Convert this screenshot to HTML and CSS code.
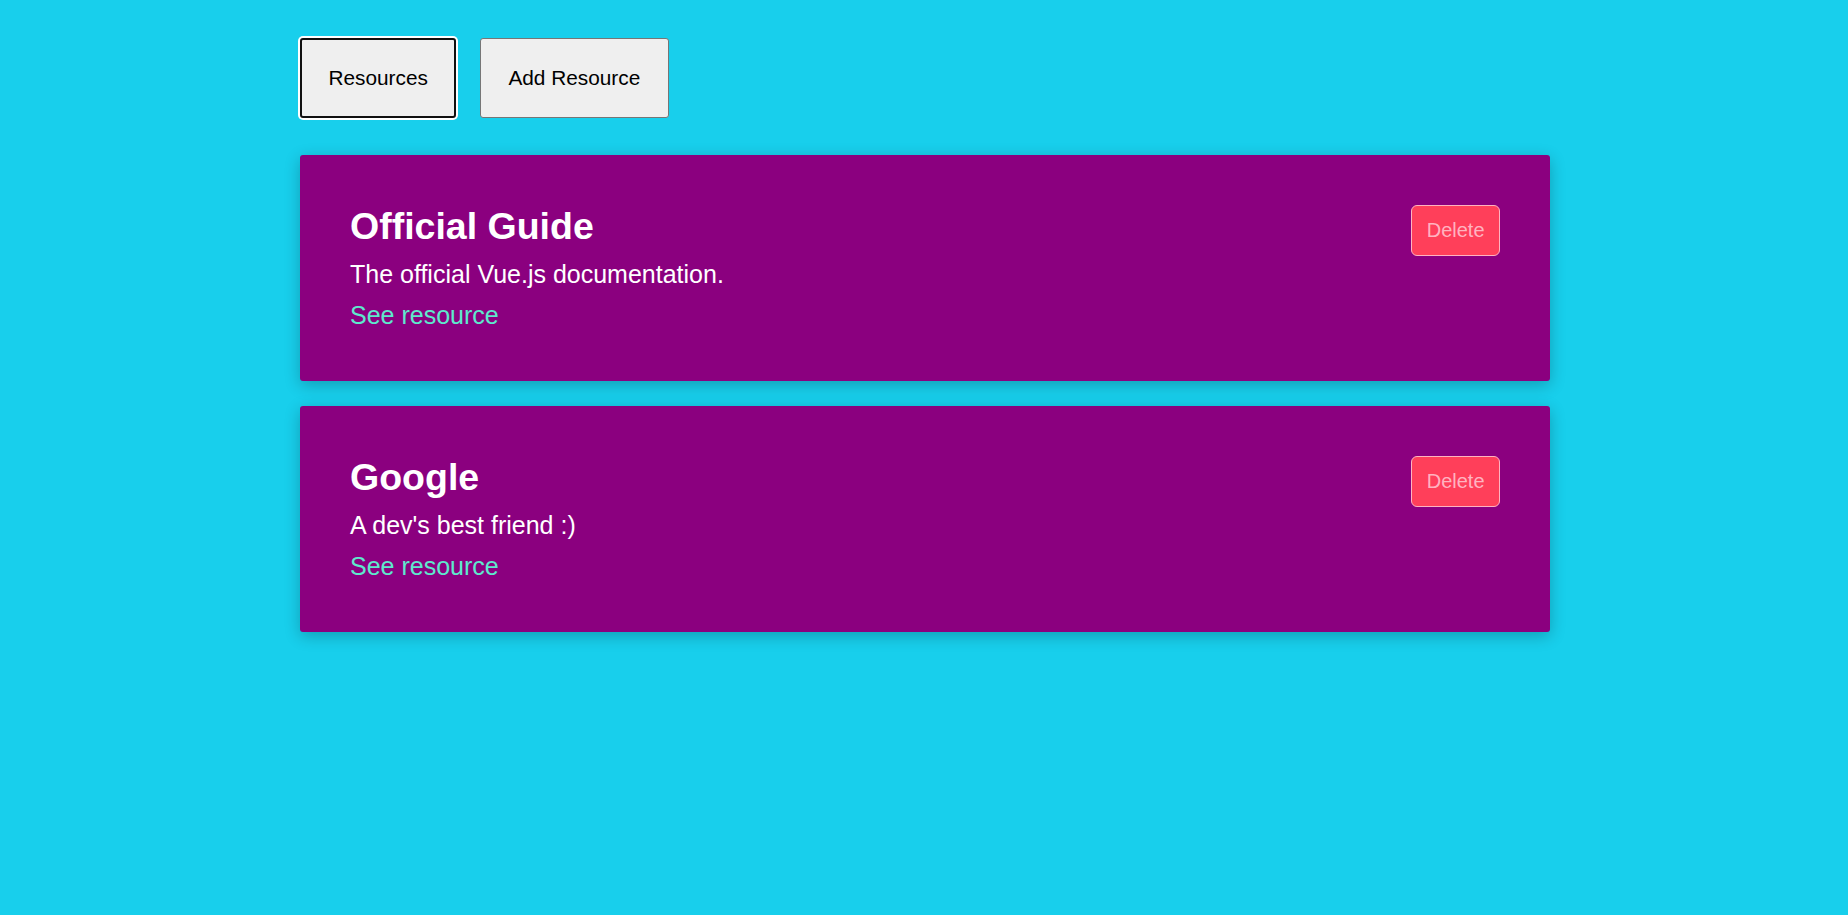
FILE: index.html
```html
<!DOCTYPE html>
<html lang="en">
<head>
<meta charset="utf-8">
<title>Learning Resources</title>
<link rel="stylesheet" href="styles.css">
</head>
<body>
<div class="page">
  <div class="tabs">
    <button class="tab tab--active">Resources</button>
    <button class="tab">Add Resource</button>
  </div>
  <ul class="resources">
    <li class="card">
      <div class="card-body">
        <h3 class="card-title">Official Guide</h3>
        <p class="card-desc">The official Vue.js documentation.</p>
        <a class="card-link" href="#">See resource</a>
      </div>
      <button class="delete-btn">Delete</button>
    </li>
    <li class="card">
      <div class="card-body">
        <h3 class="card-title">Google</h3>
        <p class="card-desc">A dev's best friend :)</p>
        <a class="card-link" href="#">See resource</a>
      </div>
      <button class="delete-btn">Delete</button>
    </li>
  </ul>
</div>
</body>
</html>
```
FILE: styles.css
```css
html, body {
  margin: 0;
  padding: 0;
}

body {
  background: #18cfec;
  font-family: "Liberation Sans", Arial, sans-serif;
  min-height: 100vh;
}

.page {
  width: 1250px;
  margin: 0 auto;
  padding: 38px 0 0 2px;
}

.tabs {
  display: flex;
  gap: 23.5px;
}

.tab {
  font-family: "Liberation Sans", Arial, sans-serif;
  font-size: 20.8px;
  line-height: 24px;
  color: #000;
  background: #efefef;
  border: 1px solid #767676;
  border-radius: 3px;
  padding: 27px 27.5px;
  cursor: pointer;
}

.tab--active {
  border: 2px solid #101010;
  padding: 26px 26.5px;
  box-shadow: 0 0 0 2px #ffffff;
}

.resources {
  list-style: none;
  margin: 37px 0 0;
  padding: 0;
  display: flex;
  flex-direction: column;
  gap: 25px;
}

.card {
  background: #8b007f;
  border-radius: 3px;
  box-shadow: 0 4px 16px rgba(0, 0, 0, 0.24);
  padding: 50px 50px 51px;
  display: flex;
  justify-content: space-between;
  align-items: flex-start;
  color: #ffffff;
}

.card-title {
  margin: 0 0 12px;
  font-size: 37.5px;
  line-height: 43px;
  font-weight: bold;
}

.card-desc {
  margin: 0 0 12px;
  font-size: 25px;
  line-height: 29px;
}

.card-link {
  display: block;
  font-size: 25px;
  line-height: 29px;
  color: #5ee9cd;
  text-decoration: none;
}

.delete-btn {
  font-family: "Liberation Sans", Arial, sans-serif;
  font-size: 20px;
  line-height: 23px;
  color: #ffb3c0;
  background: #ff3f5a;
  border: 1px solid #ffb3c0;
  border-radius: 6px;
  padding: 13px 14.5px;
  cursor: pointer;
}
```
